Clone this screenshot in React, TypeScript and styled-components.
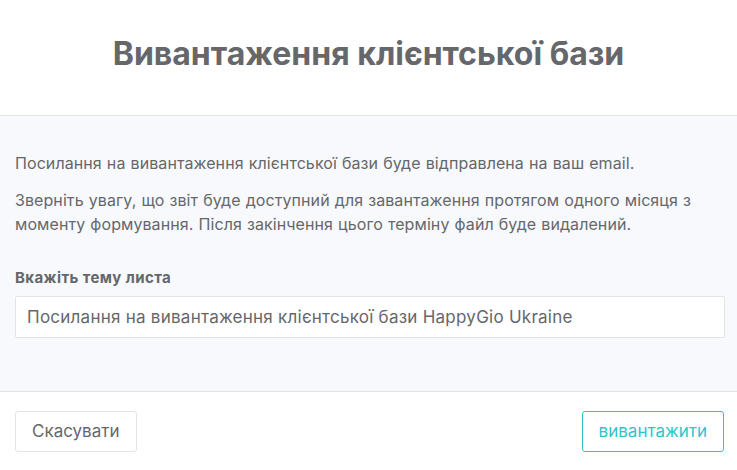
import React from "react";
import styled, { createGlobalStyle } from "styled-components";

const Global = createGlobalStyle`
  html, body { margin: 0; padding: 0; background: #ffffff; }
  body { font-family: Inter, "Noto Sans", sans-serif; }
  * { box-sizing: border-box; }
`;

const Modal = styled.div`
  width: 737px;
  height: 470px;
  display: flex;
  flex-direction: column;
  background: #ffffff;
`;

const Header = styled.header`
  height: 116px;
  flex: none;
  display: flex;
  align-items: center;
  justify-content: center;
  border-bottom: 1px solid #e3e4e8;
`;

const Title = styled.h1`
  margin: 0;
  font-size: 32px;
  font-weight: 700;
  color: #65676b;
  padding-bottom: 8px;
`;

const Body = styled.section`
  height: 276px;
  flex: none;
  background: #f8f9fd;
  border-bottom: 1px solid #e3e4e8;
  padding: 35px 15px 0 15px;
  display: flex;
  flex-direction: column;
`;

const Paragraph = styled.p`
  margin: 0 0 13px 0;
  font-size: 16px;
  line-height: 24px;
  letter-spacing: 0.08px;
  word-spacing: 0.5px;
  color: #65676b;
`;

const Label = styled.label`
  margin-top: 19px;
  font-size: 15px;
  font-weight: 700;
  line-height: 20px;
  letter-spacing: 0.4px;
  color: #65676b;
`;

const Input = styled.input`
  margin-top: 8px;
  width: 710px;
  height: 42px;
  border: 1px solid #e3e4e8;
  border-radius: 2px;
  background: #ffffff;
  padding: 0 11px;
  font-family: Inter, "Noto Sans", sans-serif;
  font-size: 17px;
  letter-spacing: 0.25px;
  color: #65676b;
  outline: none;
`;

const Footer = styled.footer`
  flex: 1;
  display: flex;
  align-items: center;
  justify-content: space-between;
  padding: 0 13px 0 15px;
`;

const Button = styled.button<{ $primary?: boolean }>`
  height: 41px;
  padding: 0 16px;
  border-radius: 3px;
  background: #ffffff;
  border: 1px solid ${(p) => (p.$primary ? "#2cc6c9" : "#e3e4e8")};
  color: ${(p) => (p.$primary ? "#2cc6c9" : "#65676b")};
  font-family: Inter, "Noto Sans", sans-serif;
  font-size: 17px;
  cursor: pointer;
`;

export default function App() {
  return (
    <>
      <Global />
      <Modal>
        <Header>
          <Title>Вивантаження клієнтської бази</Title>
        </Header>
        <Body>
          <Paragraph>Посилання на вивантаження клієнтської бази буде відправлена на ваш email.</Paragraph>
          <Paragraph>
            Зверніть увагу, що звіт буде доступний для завантаження протягом одного місяця з моменту формування.
            Після закінчення цього терміну файл буде видалений.
          </Paragraph>
          <Label>Вкажіть тему листа</Label>
          <Input defaultValue="Посилання на вивантаження клієнтської бази HappyGio Ukraine" />
        </Body>
        <Footer>
          <Button>Скасувати</Button>
          <Button $primary>вивантажити</Button>
        </Footer>
      </Modal>
    </>
  );
}
